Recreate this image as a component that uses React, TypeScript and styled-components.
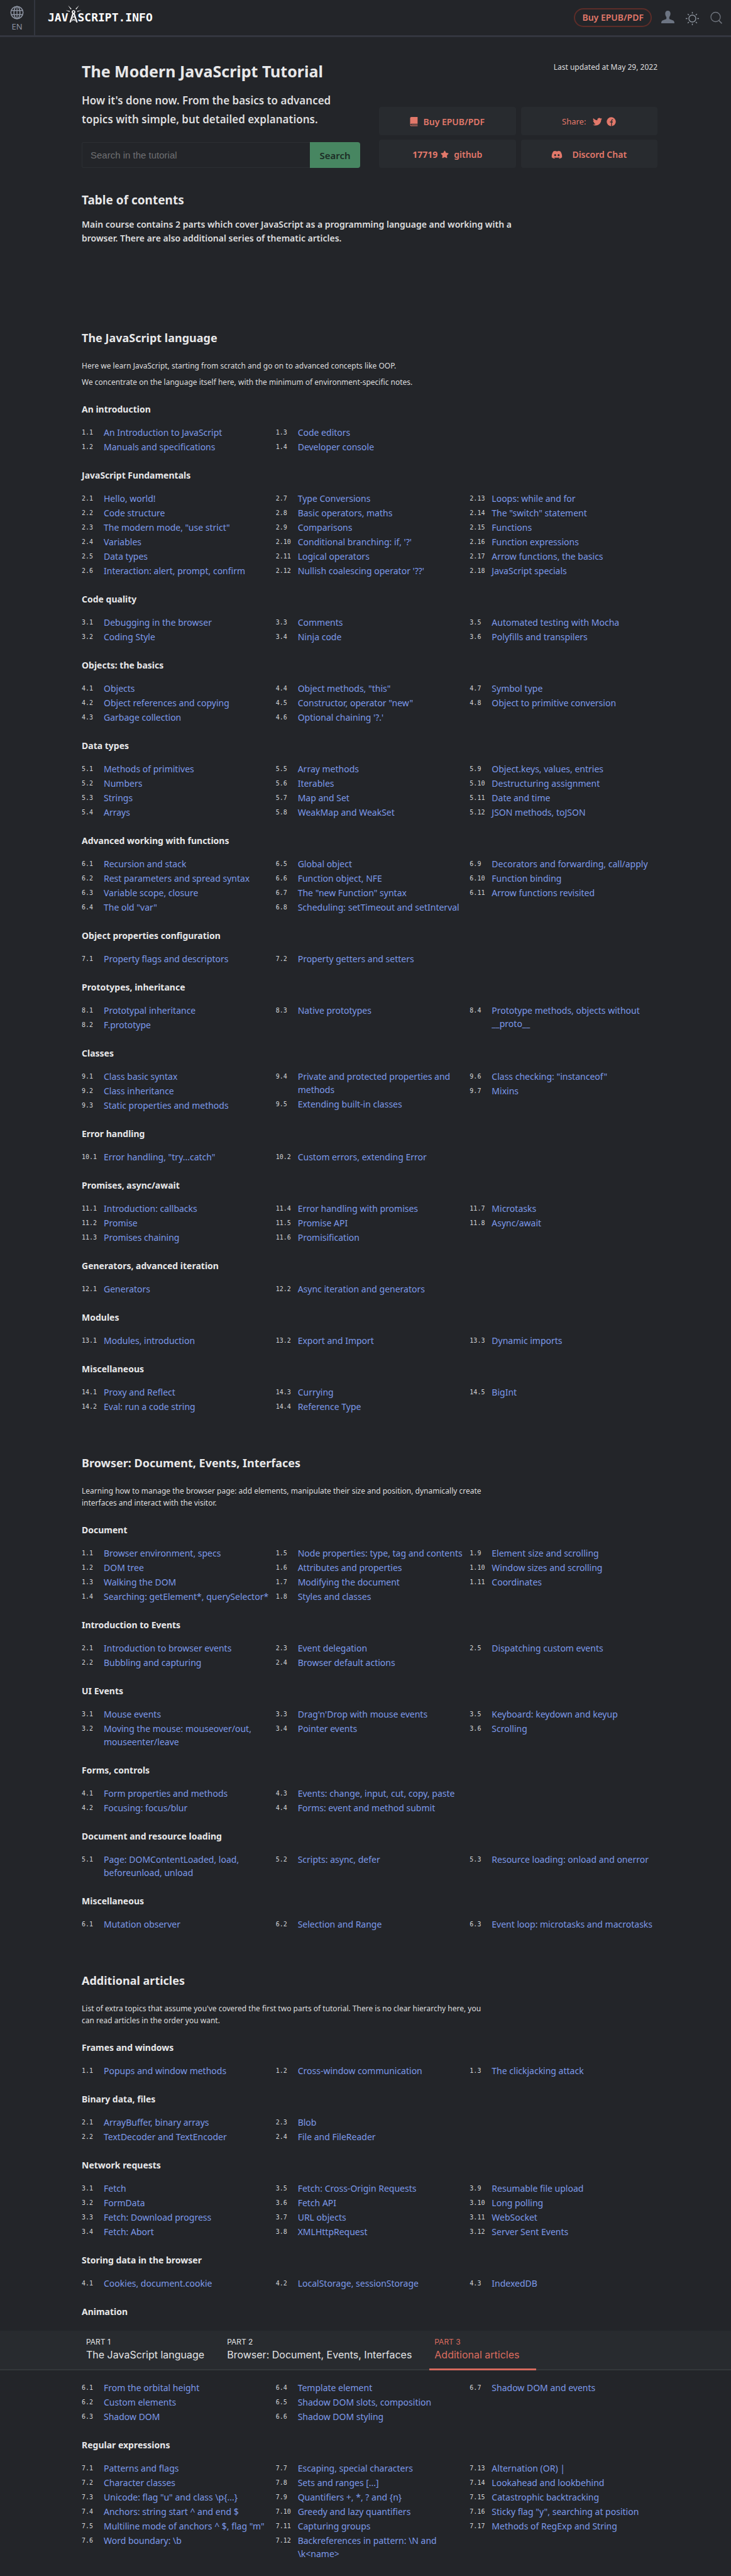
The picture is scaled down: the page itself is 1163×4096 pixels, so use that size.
import React from "react";
import styled, { createGlobalStyle } from "styled-components";
import { FaDiscord, FaStar, FaTwitter } from "react-icons/fa";

const color = {
  page: "#232529",
  panel: "#282b2f",
  line: "#33363f",
  text: "#dededf",
  heading: "#e8e8e9",
  link: "#7c99ea",
  accent: "#e2786a",
  muted: "#8b92a0",
};

const GlobalStyle = createGlobalStyle`
  *, *::before, *::after { box-sizing: border-box; }
  body {
    margin: 0;
    min-height: 100vh;
    background: ${color.page};
    color: ${color.text};
    font-family: "Noto Sans", "Open Sans", sans-serif;
    font-size: 14px;
    line-height: 21px;
  }
  h1, h2, h3, p, ol { margin: 0; padding: 0; }
  a { color: inherit; text-decoration: none; }
  svg { flex-shrink: 0; }
`;

/* ---------- header ---------- */

const Header = styled.header`
  display: flex;
  height: 59px;
  border-bottom: 3px solid ${color.line};
`;

const Language = styled.button`
  display: flex;
  flex-direction: column;
  align-items: center;
  gap: 2px;
  width: 56px;
  padding: 9px 0 0;
  border: 0;
  border-right: 2px solid ${color.line};
  background: none;
  color: ${color.muted};
  font: 13px/18px "Noto Sans", sans-serif;
`;

const Logo = styled.a`
  display: flex;
  align-items: flex-start;
  padding: 8px 0 0 20px;
  color: #fff;
  font: bold 18px/28px "DejaVu Sans Mono", monospace;
`;

const LogoText = styled.span`
  padding-top: 6px;
`;

const Tower = styled.svg`
  margin: 0 -6px 0 -5px;
`;

const HeaderTools = styled.div`
  display: flex;
  align-items: flex-start;
  gap: 18px;
  margin-left: auto;
  padding: 13px 14px 0 0;
`;

const BuyLink = styled.a`
  margin-right: -3px;
  padding: 0 11px;
  border: 2px solid #5d2d29;
  border-radius: 15px;
  color: ${color.accent};
  font-weight: 600;
  line-height: 26px;
`;

const IconButton = styled.button<{ $tone: string }>`
  display: flex;
  padding: 4px 0 0;
  border: 0;
  background: none;
  color: ${(p) => p.$tone};
`;

/* ---------- intro ---------- */

const Container = styled.div`
  padding: 0 117px 0 130px;
`;

const Intro = styled.section`
  display: grid;
  grid-template-columns: 1fr 1fr;
  gap: 30px;
  padding-top: 37px;
`;

const Title = styled.h1`
  color: ${color.heading};
  font-size: 25px;
  font-weight: 700;
  line-height: 34px;
`;

const Lead = styled.p`
  max-width: 430px;
  padding: 15px 0 21px;
  font-size: 17px;
  font-weight: 600;
  line-height: 30px;
`;

const SearchForm = styled.form`
  display: flex;
  height: 41px;
`;

const SearchInput = styled.input`
  flex: 1;
  min-width: 0;
  padding: 0 13px;
  border: 1px solid #2c2f33;
  border-right: 0;
  border-radius: 3px 0 0 3px;
  background: none;
  color: ${color.text};
  font: 15px "Liberation Sans", Arial, sans-serif;
  &::placeholder { color: #6f7072; opacity: 1; }
`;

const SearchButton = styled.button`
  width: 80px;
  padding: 0;
  border: 0;
  border-radius: 0 4px 4px 0;
  background: #478661;
  color: #1c2d26;
  font: 600 15px "Noto Sans", sans-serif;
`;

const Side = styled.div`
  display: flex;
  flex-direction: column;
  justify-content: space-between;
`;

const Updated = styled.p`
  padding-top: 2px;
  font-size: 12px;
  line-height: 17px;
  text-align: right;
`;

const Cards = styled.div`
  display: grid;
  grid-template-columns: 1fr 1fr;
  gap: 7px 8px;
`;

const Card = styled.div<{ $gap?: number }>`
  display: flex;
  align-items: center;
  justify-content: center;
  gap: ${(p) => p.$gap ?? 8}px;
  height: 45px;
  padding-top: 2px;
  border-radius: 4px;
  background: ${color.panel};
  color: ${color.accent};
  font-weight: 600;
`;

const ShareLabel = styled.span`
  margin-right: 4px;
  font-size: 13px;
  font-weight: 400;
`;

const ShareLink = styled.a`
  display: flex;
`;

const Stars = styled.strong`
  display: flex;
  align-items: center;
  gap: 5px;
  font-weight: 700;
`;

/* ---------- contents ---------- */

const ContentsTitle = styled.h2`
  padding-top: 38px;
  color: ${color.heading};
  font-size: 19px;
  font-weight: 700;
  line-height: 26px;
`;

const ContentsNote = styled.p`
  max-width: 690px;
  padding: 15px 0 70px;
  font-weight: 600;
  line-height: 22px;
`;

const PartTitle = styled.h2`
  padding: 65px 0 23px;
  color: ${color.heading};
  font-size: 18px;
  font-weight: 700;
  line-height: 24px;
`;

const PartNote = styled.p`
  max-width: 650px;
  margin-bottom: 7px;
  font-size: 12px;
  line-height: 19px;
`;

const TopicTitle = styled.h3<{ $first?: boolean }>`
  padding-top: ${(p) => (p.$first ? 17 : 23)}px;
  color: ${color.heading};
  font-size: 14px;
  font-weight: 700;
  line-height: 19px;
`;

const Columns = styled.div`
  display: grid;
  grid-template-columns: repeat(3, 1fr);
  column-gap: 10px;
  padding-top: 17px;
`;

const Lessons = styled.ol`
  list-style: none;
`;

const Lesson = styled.li`
  display: flex;
`;

const LessonNumber = styled.span`
  flex: 0 0 35px;
  color: #d3d4d6;
  font-family: "DejaVu Sans Mono", monospace;
  font-size: 10px;
  line-height: 21px;
`;

const LessonLink = styled.a`
  padding-bottom: 2px;
  color: ${color.link};
`;

/* ---------- part tabs ---------- */

const Tabs = styled.nav`
  display: flex;
  gap: 2px;
  height: 63px;
  margin-top: 21px;
  padding-left: 129px;
  border-bottom: 2px solid #34383b;
  background: ${color.panel};
`;

const Tab = styled.a<{ $active?: boolean }>`
  display: flex;
  flex-direction: column;
  height: 63px;
  padding: 10px 26px 0 8px;
  border-bottom: 3px solid ${(p) => (p.$active ? "#d4695d" : "transparent")};
  color: ${(p) => (p.$active ? "#dc6c5f" : "#e3e4e6")};
  font: 16px/24px Inter, sans-serif;
`;

const TabLabel = styled.small`
  font-size: 12px;
  line-height: 16px;
`;

/* ---------- data ---------- */

type Topic = { title?: string; number: number; columns: string[][] };
type Part = { title: string; notes: string[]; topics: Topic[] };

const parts: Part[] = [
  {
    title: "The JavaScript language",
    notes: [
      "Here we learn JavaScript, starting from scratch and go on to advanced concepts like OOP.",
      "We concentrate on the language itself here, with the minimum of environment-specific notes.",
    ],
    topics: [
      { title: "An introduction", number: 1, columns: [
        ["An Introduction to JavaScript", "Manuals and specifications"],
        ["Code editors", "Developer console"],
      ] },
      { title: "JavaScript Fundamentals", number: 2, columns: [
        ["Hello, world!", "Code structure", 'The modern mode, "use strict"', "Variables", "Data types", "Interaction: alert, prompt, confirm"],
        ["Type Conversions", "Basic operators, maths", "Comparisons", "Conditional branching: if, '?'", "Logical operators", "Nullish coalescing operator '??'"],
        ["Loops: while and for", 'The "switch" statement', "Functions", "Function expressions", "Arrow functions, the basics", "JavaScript specials"],
      ] },
      { title: "Code quality", number: 3, columns: [
        ["Debugging in the browser", "Coding Style"],
        ["Comments", "Ninja code"],
        ["Automated testing with Mocha", "Polyfills and transpilers"],
      ] },
      { title: "Objects: the basics", number: 4, columns: [
        ["Objects", "Object references and copying", "Garbage collection"],
        ['Object methods, "this"', 'Constructor, operator "new"', "Optional chaining '?.'"],
        ["Symbol type", "Object to primitive conversion"],
      ] },
      { title: "Data types", number: 5, columns: [
        ["Methods of primitives", "Numbers", "Strings", "Arrays"],
        ["Array methods", "Iterables", "Map and Set", "WeakMap and WeakSet"],
        ["Object.keys, values, entries", "Destructuring assignment", "Date and time", "JSON methods, toJSON"],
      ] },
      { title: "Advanced working with functions", number: 6, columns: [
        ["Recursion and stack", "Rest parameters and spread syntax", "Variable scope, closure", 'The old "var"'],
        ["Global object", "Function object, NFE", 'The "new Function" syntax', "Scheduling: setTimeout and setInterval"],
        ["Decorators and forwarding, call/apply", "Function binding", "Arrow functions revisited"],
      ] },
      { title: "Object properties configuration", number: 7, columns: [
        ["Property flags and descriptors"],
        ["Property getters and setters"],
      ] },
      { title: "Prototypes, inheritance", number: 8, columns: [
        ["Prototypal inheritance", "F.prototype"],
        ["Native prototypes"],
        ["Prototype methods, objects without __proto__"],
      ] },
      { title: "Classes", number: 9, columns: [
        ["Class basic syntax", "Class inheritance", "Static properties and methods"],
        ["Private and protected properties and methods", "Extending built-in classes"],
        ['Class checking: "instanceof"', "Mixins"],
      ] },
      { title: "Error handling", number: 10, columns: [
        ['Error handling, "try...catch"'],
        ["Custom errors, extending Error"],
      ] },
      { title: "Promises, async/await", number: 11, columns: [
        ["Introduction: callbacks", "Promise", "Promises chaining"],
        ["Error handling with promises", "Promise API", "Promisification"],
        ["Microtasks", "Async/await"],
      ] },
      { title: "Generators, advanced iteration", number: 12, columns: [
        ["Generators"],
        ["Async iteration and generators"],
      ] },
      { title: "Modules", number: 13, columns: [
        ["Modules, introduction"],
        ["Export and Import"],
        ["Dynamic imports"],
      ] },
      { title: "Miscellaneous", number: 14, columns: [
        ["Proxy and Reflect", "Eval: run a code string"],
        ["Currying", "Reference Type"],
        ["BigInt"],
      ] },
    ],
  },
  {
    title: "Browser: Document, Events, Interfaces",
    notes: [
      "Learning how to manage the browser page: add elements, manipulate their size and position, dynamically create interfaces and interact with the visitor.",
    ],
    topics: [
      { title: "Document", number: 1, columns: [
        ["Browser environment, specs", "DOM tree", "Walking the DOM", "Searching: getElement*, querySelector*"],
        ["Node properties: type, tag and contents", "Attributes and properties", "Modifying the document", "Styles and classes"],
        ["Element size and scrolling", "Window sizes and scrolling", "Coordinates"],
      ] },
      { title: "Introduction to Events", number: 2, columns: [
        ["Introduction to browser events", "Bubbling and capturing"],
        ["Event delegation", "Browser default actions"],
        ["Dispatching custom events"],
      ] },
      { title: "UI Events", number: 3, columns: [
        ["Mouse events", "Moving the mouse: mouseover/out, mouseenter/leave"],
        ["Drag'n'Drop with mouse events", "Pointer events"],
        ["Keyboard: keydown and keyup", "Scrolling"],
      ] },
      { title: "Forms, controls", number: 4, columns: [
        ["Form properties and methods", "Focusing: focus/blur"],
        ["Events: change, input, cut, copy, paste", "Forms: event and method submit"],
      ] },
      { title: "Document and resource loading", number: 5, columns: [
        ["Page: DOMContentLoaded, load, beforeunload, unload"],
        ["Scripts: async, defer"],
        ["Resource loading: onload and onerror"],
      ] },
      { title: "Miscellaneous", number: 6, columns: [
        ["Mutation observer"],
        ["Selection and Range"],
        ["Event loop: microtasks and macrotasks"],
      ] },
    ],
  },
  {
    title: "Additional articles",
    notes: [
      "List of extra topics that assume you've covered the first two parts of tutorial. There is no clear hierarchy here, you can read articles in the order you want.",
    ],
    topics: [
      { title: "Frames and windows", number: 1, columns: [
        ["Popups and window methods"],
        ["Cross-window communication"],
        ["The clickjacking attack"],
      ] },
      { title: "Binary data, files", number: 2, columns: [
        ["ArrayBuffer, binary arrays", "TextDecoder and TextEncoder"],
        ["Blob", "File and FileReader"],
      ] },
      { title: "Network requests", number: 3, columns: [
        ["Fetch", "FormData", "Fetch: Download progress", "Fetch: Abort"],
        ["Fetch: Cross-Origin Requests", "Fetch API", "URL objects", "XMLHttpRequest"],
        ["Resumable file upload", "Long polling", "WebSocket", "Server Sent Events"],
      ] },
      { title: "Storing data in the browser", number: 4, columns: [
        ["Cookies, document.cookie"],
        ["LocalStorage, sessionStorage"],
        ["IndexedDB"],
      ] },
    ],
  },
];

const closingTopics: Topic[] = [
  { number: 6, columns: [
    ["From the orbital height", "Custom elements", "Shadow DOM"],
    ["Template element", "Shadow DOM slots, composition", "Shadow DOM styling"],
    ["Shadow DOM and events"],
  ] },
  { title: "Regular expressions", number: 7, columns: [
    ["Patterns and flags", "Character classes", 'Unicode: flag "u" and class \\p{...}', "Anchors: string start ^ and end $", 'Multiline mode of anchors ^ $, flag "m"', "Word boundary: \\b"],
    ["Escaping, special characters", "Sets and ranges [...]", "Quantifiers +, *, ? and {n}", "Greedy and lazy quantifiers", "Capturing groups", "Backreferences in pattern: \\N and \\k<name>"],
    ["Alternation (OR) |", "Lookahead and lookbehind", "Catastrophic backtracking", 'Sticky flag "y", searching at position', "Methods of RegExp and String"],
  ] },
];

/* ---------- pieces ---------- */

function TopicBlock({ topic, first }: { topic: Topic; first?: boolean }) {
  let count = 0;
  return (
    <section>
      {topic.title && <TopicTitle $first={first}>{topic.title}</TopicTitle>}
      <Columns>
        {topic.columns.map((column, i) => (
          <Lessons key={i}>
            {column.map((name) => {
              count += 1;
              return (
                <Lesson key={name}>
                  <LessonNumber>{topic.number}.{count}</LessonNumber>
                  <LessonLink href="#">{name}</LessonLink>
                </Lesson>
              );
            })}
          </Lessons>
        ))}
      </Columns>
    </section>
  );
}

const GlobeIcon = () => (
  <svg width="22" height="22" viewBox="0 0 22 22" fill="none" stroke="currentColor" strokeWidth="1.6" aria-hidden="true">
    <circle cx="11" cy="11" r="9.7" />
    <ellipse cx="11" cy="11" rx="4.8" ry="9.7" />
    <path d="M11 1.3v19.4M2 7.7h18M2 14.3h18" strokeWidth="1.4" />
  </svg>
);

const TowerMark = () => (
  <Tower width="26" height="28" viewBox="0 0 26 28" aria-hidden="true">
    <g fill="none" stroke="#fff" strokeLinecap="round">
      <circle cx="13" cy="11" r="2" strokeWidth="1.6" />
      <path d="M12.2 13.4 7.6 27M13.8 13.4 18.4 27" strokeWidth="2" />
      <path d="M11.4 17.2l4.4 3.2M14.8 17.8l-4.6 3.4M9.8 22l7 3.4M16.2 21.8l-7 3.8" strokeWidth="1" />
    </g>
    <g fill="#fff">
      <path d="M4.2.4 9.8 6 8.6 7z" />
      <path d="M21.8.4 16.2 6l1.2 1z" />
      <path d="M.6 8.2 7 9.6l-.2 1.5z" />
      <path d="M25.4 8.2 19 9.6l.2 1.5z" />
    </g>
  </Tower>
);

const UserIcon = () => (
  <svg width="21" height="20" viewBox="0 0 21 20" fill="currentColor" aria-hidden="true">
    <path d="M10.5 0C7.9 0 6.3 1.9 6.3 4.5c0 2.2.7 4.3 1.9 5.5v3c-1.2 1.1-4.5 1.7-6.2 2.5C.7 16.2 0 17.7 0 20h21c0-2.3-.7-3.8-2-4.5-1.7-.8-5-1.4-6.2-2.5v-3c1.2-1.2 1.9-3.3 1.9-5.5C14.7 1.9 13.1 0 10.5 0z" />
  </svg>
);

const SunIcon = () => (
  <svg width="21" height="24" viewBox="0 0 21 24" fill="none" stroke="currentColor" strokeWidth="1.4" aria-hidden="true">
    <circle cx="10.5" cy="12.5" r="5.5" />
    <path d="M10.5 2v2.6M10.5 20.4V23M0 12.5h2.6M18.4 12.5H21M3.2 5.2 5 7M16 18l1.8 1.8M3.2 19.8 5 18M16 7l1.8-1.8" />
  </svg>
);

const SearchIcon = () => (
  <svg width="19" height="21" viewBox="0 0 19 21" fill="none" stroke="currentColor" strokeWidth="1.3" aria-hidden="true">
    <circle cx="8.5" cy="10" r="7.5" />
    <path d="M13.6 15.4 18.4 20.4" strokeWidth="1.6" />
  </svg>
);

const BookIcon = () => (
  <svg width="13" height="15" viewBox="0 0 13 15" fill="currentColor" aria-hidden="true">
    <path d="M2.6 0H12.4V10.8H2.6C1.2 10.8.5 11.5.5 12.6V2.2C.5.8 1.3 0 2.6 0z" />
    <path d="M2.6 11.8H12.4V12.6H2.6zM.6 12.6C.6 14 1.3 14.6 2.6 14.6H12.4V13.6H2.6C1.6 13.6 1.6 12.6 1.6 12z" />
  </svg>
);

const FacebookIcon = () => (
  <svg width="15" height="15" viewBox="0 0 15 15" aria-hidden="true">
    <circle cx="7.5" cy="7.5" r="7.2" fill="currentColor" />
    <path d="M7.9 15V6.2c0-1.3.7-1.9 2.3-1.7M5.4 8h4.6" fill="none" stroke={color.panel} strokeWidth="1.3" />
  </svg>
);

export default function App() {
  return (
    <>
      <GlobalStyle />
      <Header>
        <Language type="button" aria-label="Language: EN">
          <GlobeIcon />
          EN
        </Language>
        <Logo href="#" aria-label="JavaScript.info">
          <LogoText>JAV</LogoText>
          <TowerMark />
          <LogoText>SCRIPT.INFO</LogoText>
        </Logo>
        <HeaderTools>
          <BuyLink href="#">Buy EPUB/PDF</BuyLink>
          <IconButton type="button" aria-label="Log in" $tone="#6c7482"><UserIcon /></IconButton>
          <IconButton type="button" aria-label="Switch theme" $tone="#8e959f"><SunIcon /></IconButton>
          <IconButton type="button" aria-label="Search" $tone="#6f747d"><SearchIcon /></IconButton>
        </HeaderTools>
      </Header>

      <main>
        <Container>
          <Intro>
            <div>
              <Title>The Modern JavaScript Tutorial</Title>
              <Lead>How it's done now. From the basics to advanced topics with simple, but detailed explanations.</Lead>
              <SearchForm>
                <SearchInput type="text" aria-label="Search in the tutorial" placeholder="Search in the tutorial" />
                <SearchButton type="submit">Search</SearchButton>
              </SearchForm>
            </div>
            <Side>
              <Updated>Last updated at May 29, 2022</Updated>
              <Cards>
                <Card as="a" href="#"><BookIcon />Buy EPUB/PDF</Card>
                <Card $gap={7}>
                  <ShareLabel>Share:</ShareLabel>
                  <ShareLink href="#" aria-label="Share on Twitter"><FaTwitter size={15} /></ShareLink>
                  <ShareLink href="#" aria-label="Share on Facebook"><FacebookIcon /></ShareLink>
                </Card>
                <Card as="a" href="#"><Stars>17719 <FaStar size={13} /></Stars>github</Card>
                <Card as="a" href="#" $gap={15}><FaDiscord size={18} />Discord Chat</Card>
              </Cards>
            </Side>
          </Intro>

          <ContentsTitle>Table of contents</ContentsTitle>
          <ContentsNote>
            Main course contains 2 parts which cover JavaScript as a programming language and working with a browser. There are also additional series of thematic articles.
          </ContentsNote>

          {parts.map((part) => (
            <section key={part.title}>
              <PartTitle>{part.title}</PartTitle>
              {part.notes.map((note) => <PartNote key={note}>{note}</PartNote>)}
              {part.topics.map((topic, i) => <TopicBlock key={topic.number} topic={topic} first={i === 0} />)}
            </section>
          ))}
          <TopicTitle>Animation</TopicTitle>
        </Container>

        <Tabs aria-label="Parts">
          <Tab href="#"><TabLabel>PART 1</TabLabel>The JavaScript language</Tab>
          <Tab href="#"><TabLabel>PART 2</TabLabel>Browser: Document, Events, Interfaces</Tab>
          <Tab href="#" $active aria-current="true"><TabLabel>PART 3</TabLabel>Additional articles</Tab>
        </Tabs>

        <Container>
          {closingTopics.map((topic) => <TopicBlock key={topic.number} topic={topic} />)}
        </Container>
      </main>
    </>
  );
}
